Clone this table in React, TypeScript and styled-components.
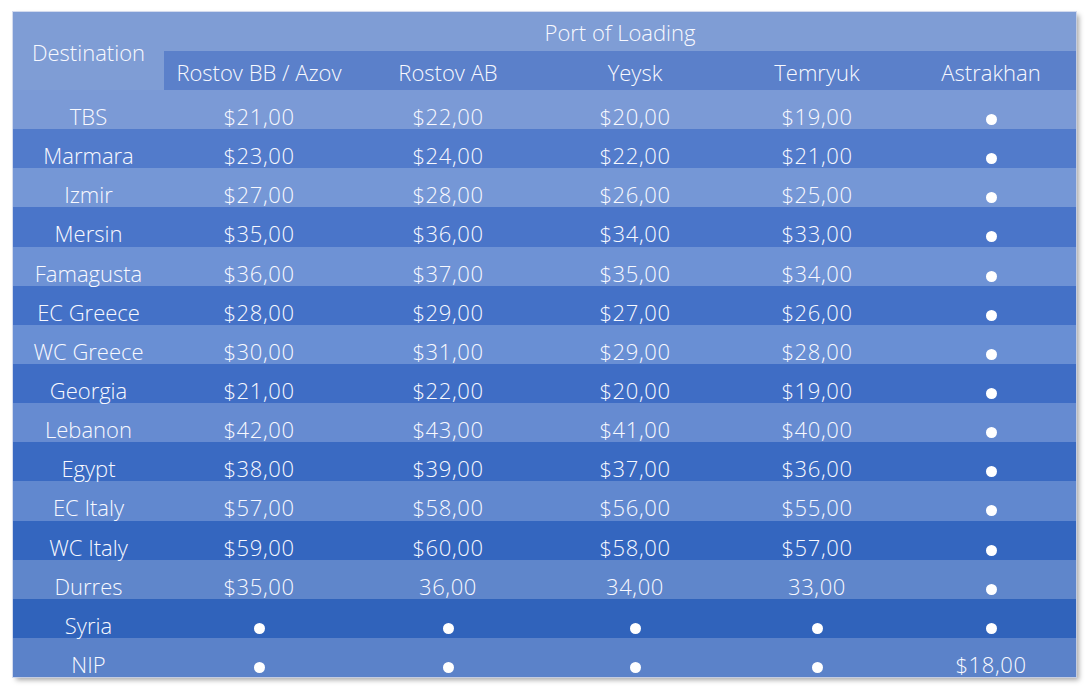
import styled, { createGlobalStyle } from "styled-components";

const GlobalStyle = createGlobalStyle`
  html, body {
    margin: 0;
    background: #ffffff;
  }
  body {
    font-family: "Open Sans", "Liberation Sans", sans-serif;
  }
`

const cols = "151px 190px 188px 186px 178px 170px"

const Page = styled.div`
  padding: 12px 0 14px 13px;
`

const Table = styled.div`
  width: 1063px;
  box-shadow: 3px 3px 5px rgba(0, 0, 0, 0.35);
  outline: 1px solid rgba(200, 210, 235, 0.8);
  color: #f8f9ff;
  font-weight: 300;
  font-size: 22px;
`

const Head = styled.div`
  display: grid;
  grid-template-columns: ${cols};
  grid-template-rows: 39px 39px;
  background: #7f9dd5;
`

const DestHead = styled.div`
  grid-row: 1 / 3;
  text-align: center;
  line-height: 1;
  padding-top: 29px;
`

const PortHead = styled.div`
  grid-column: 2 / 7;
  text-align: center;
  line-height: 1;
  padding-top: 9px;
`

const PortName = styled.div`
  background: #5b80ca;
  text-align: center;
  line-height: 1;
  padding-top: 10px;
`

const Row = styled.div<{ $bg: string }>`
  display: grid;
  grid-template-columns: ${cols};
  height: 39.15px;
  background: ${(p) => p.$bg};
`

const Cell = styled.div<{ $num?: boolean }>`
  text-align: center;
  line-height: 1;
  padding-top: 15px;
  white-space: nowrap;
  letter-spacing: ${(p) => (p.$num ? "0.6px" : "0")};
`

const Dot = styled.span`
  display: inline-block;
  width: 11px;
  height: 11px;
  border-radius: 50%;
  background: #ffffff;
`

const ports = ["Rostov BB / Azov", "Rostov AB", "Yeysk", "Temryuk", "Astrakhan"]

const rows: [string, string[]][] = [
  ["TBS", ["$21,00", "$22,00", "$20,00", "$19,00", ""]],
  ["Marmara", ["$23,00", "$24,00", "$22,00", "$21,00", ""]],
  ["Izmir", ["$27,00", "$28,00", "$26,00", "$25,00", ""]],
  ["Mersin", ["$35,00", "$36,00", "$34,00", "$33,00", ""]],
  ["Famagusta", ["$36,00", "$37,00", "$35,00", "$34,00", ""]],
  ["EC Greece", ["$28,00", "$29,00", "$27,00", "$26,00", ""]],
  ["WC Greece", ["$30,00", "$31,00", "$29,00", "$28,00", ""]],
  ["Georgia", ["$21,00", "$22,00", "$20,00", "$19,00", ""]],
  ["Lebanon", ["$42,00", "$43,00", "$41,00", "$40,00", ""]],
  ["Egypt", ["$38,00", "$39,00", "$37,00", "$36,00", ""]],
  ["EC Italy", ["$57,00", "$58,00", "$56,00", "$55,00", ""]],
  ["WC Italy", ["$59,00", "$60,00", "$58,00", "$57,00", ""]],
  ["Durres", ["$35,00", "36,00", "34,00", "33,00", ""]],
  ["Syria", ["", "", "", "", ""]],
  ["NIP", ["", "", "", "", "$18,00"]],
]

const light = ["#7b9ad6", "#7597d6", "#6e92d5", "#698fd4", "#668bd1", "#6188cf", "#5f86cb", "#5b82c9"]
const dark = ["#527bcb", "#4a75c9", "#4471c7", "#3f6dc5", "#3a6ac2", "#3466bf", "#3063bb"]

const App = () => {
  return (
    <Page>
      <GlobalStyle />
      <Table>
        <Head>
          <DestHead>Destination</DestHead>
          <PortHead>Port of Loading</PortHead>
          {ports.map((p) => (
            <PortName key={p}>{p}</PortName>
          ))}
        </Head>
        {rows.map(([dest, prices], i) => (
          <Row key={dest} $bg={i % 2 === 0 ? light[i / 2] : dark[(i - 1) / 2]}>
            <Cell>{dest}</Cell>
            {prices.map((v, j) => (
              <Cell key={j} $num>{v ? v : <Dot />}</Cell>
            ))}
          </Row>
        ))}
      </Table>
    </Page>
  )
}

export default App;
